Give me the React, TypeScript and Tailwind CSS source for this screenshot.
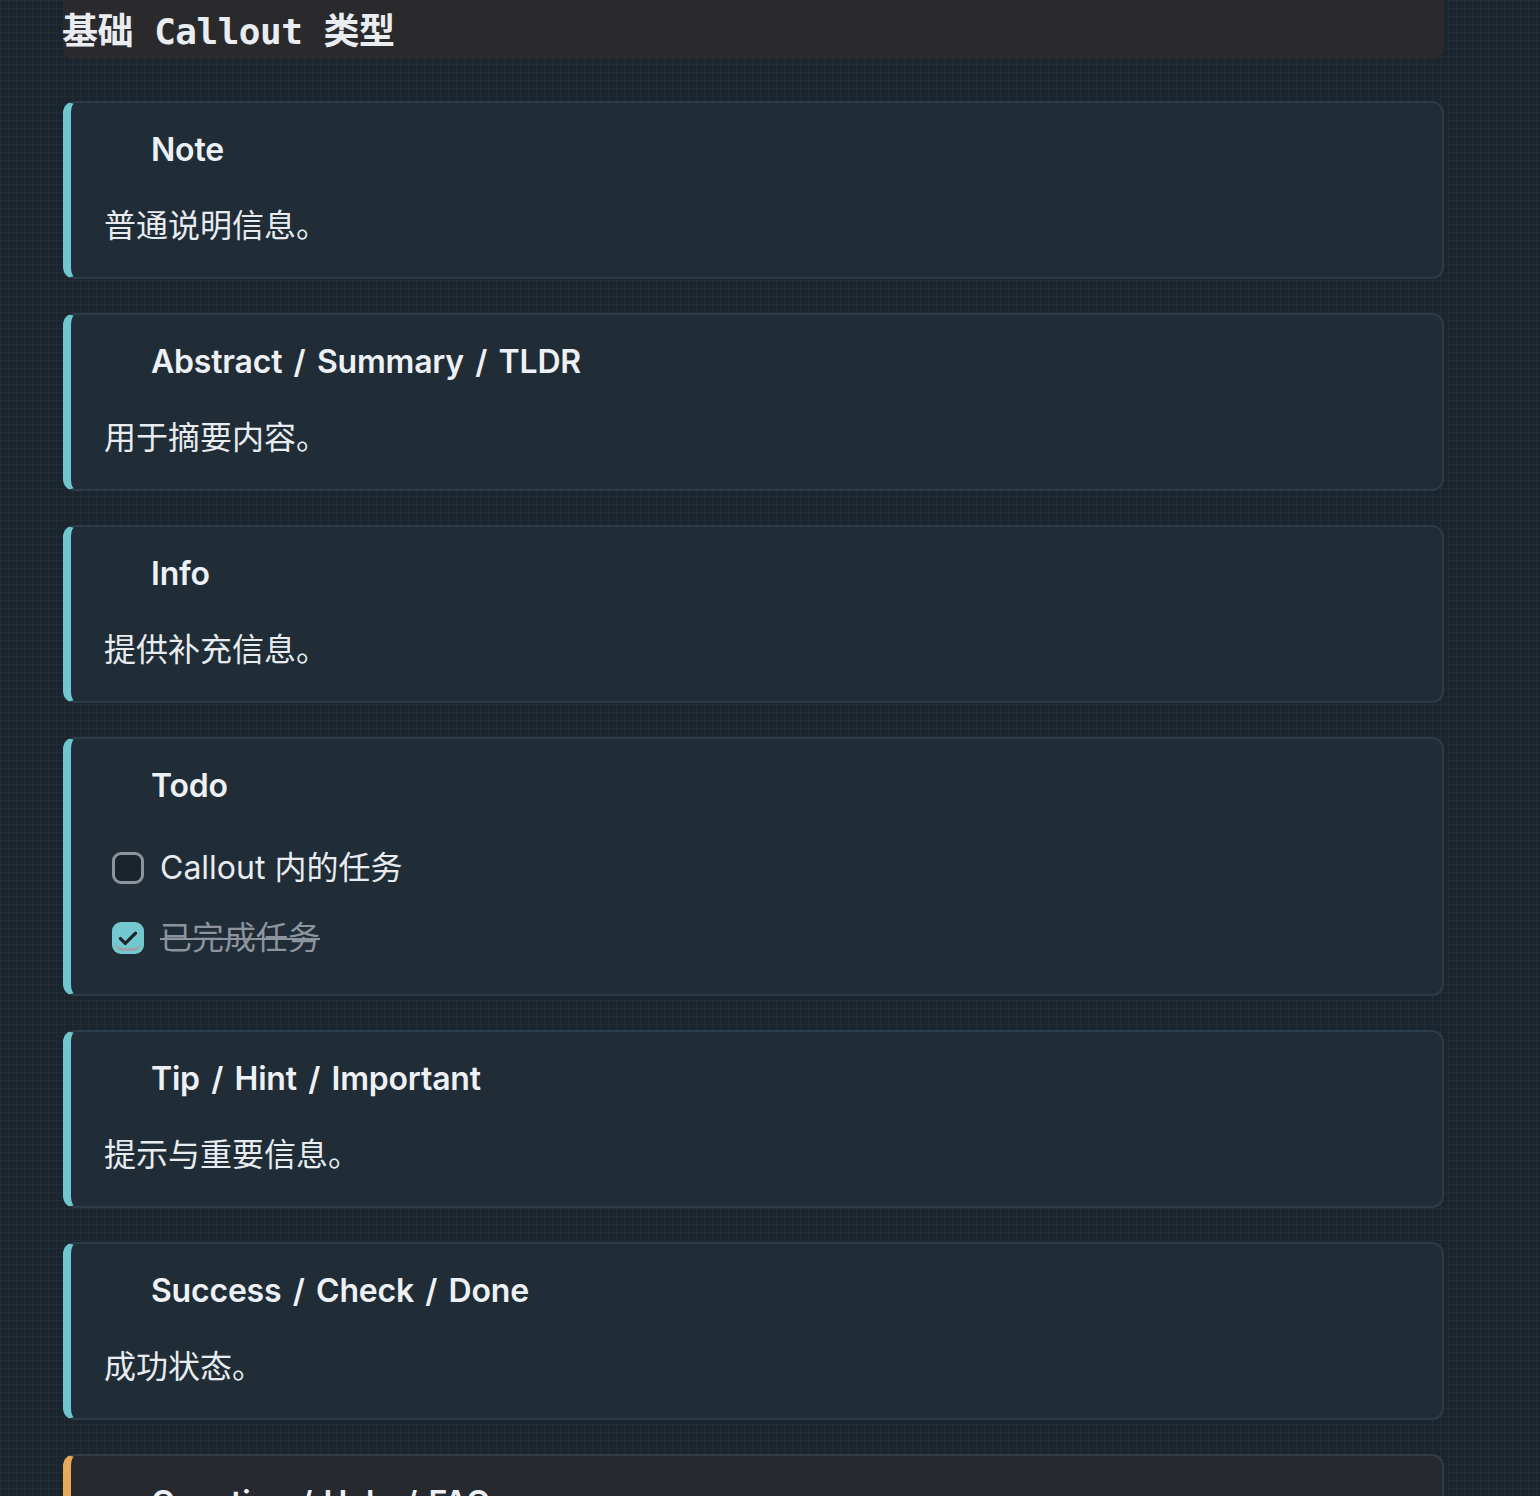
import React from "react";

const FONT = '"Inter", "Noto Sans CJK SC", sans-serif';

type Callout = {
  title: string;
  body?: string;
  accent: "teal" | "orange";
  todo?: boolean;
};

const callouts: Callout[] = [
  { title: "Note", body: "普通说明信息。", accent: "teal" },
  { title: "Abstract / Summary / TLDR", body: "用于摘要内容。", accent: "teal" },
  { title: "Info", body: "提供补充信息。", accent: "teal" },
  { title: "Todo", accent: "teal", todo: true },
  { title: "Tip / Hint / Important", body: "提示与重要信息。", accent: "teal" },
  { title: "Success / Check / Done", body: "成功状态。", accent: "teal" },
  { title: "Question / Help / FAQ", body: "问题与帮助。", accent: "orange" },
];

function Checkbox({ checked }: { checked: boolean }) {
  if (!checked) {
    return (
      <span className="ml-2 block h-8 w-8 shrink-0 rounded-[9px] border-[3px] border-[#8b949c] bg-[#1b232b]" />
    );
  }
  return (
    <span className="relative ml-2 flex h-8 w-8 shrink-0 items-center justify-center overflow-hidden rounded-[9px] bg-[#74c8d0]">
      <span className="absolute bottom-[3px] left-[3px] right-[3px] h-[8px] rounded-b-full border-b-[3px] border-[#9aa3aa]" />
      <svg viewBox="0 0 24 24" className="relative h-[26px] w-[26px]" fill="none">
        <path d="M5 12.5l4.5 4.5L19 7.5" stroke="#1b232b" strokeWidth="3" strokeLinecap="round" strokeLinejoin="round" />
      </svg>
    </span>
  );
}

function CalloutCard({ c }: { c: Callout }) {
  const orange = c.accent === "orange";
  return (
    <div
      className={
        orange
          ? "rounded-[12px] border-2 border-l-[8px] border-[#353e46] border-l-[#e8a95c] bg-[#262a2f] pb-[31px] pl-[33px] pr-8 pt-[27px]"
          : "rounded-[12px] border-2 border-l-[8px] border-[#2c3c48] border-l-[#70c6cf] bg-[#202c36] pb-[31px] pl-[33px] pr-8 pt-[27px]"
      }
    >
      <div className="pl-[47px] text-[32px] font-semibold leading-[40px] tracking-[-0.2px] text-[#edf1f5] [word-spacing:3.5px]">
        {c.title}
      </div>
      {c.todo ? (
        <div className="mt-[42px] mb-[5px] flex flex-col gap-[30px]">
          <div className="flex items-center gap-4">
            <Checkbox checked={false} />
            <span className="text-[32px] leading-[40px] text-[#e8ecf0]">Callout 内的任务</span>
          </div>
          <div className="flex items-center gap-4">
            <Checkbox checked />
            <span className="text-[32px] leading-[40px] text-[#8c959e] line-through decoration-2">已完成任务</span>
          </div>
        </div>
      ) : (
        <div className="mt-[36px] text-[32px] leading-[40px] text-[#e8ecf0]">{c.body}</div>
      )}
    </div>
  );
}

export default function App() {
  return (
    <div
      className="min-h-screen bg-[#1b252e] bg-[linear-gradient(rgba(255,255,255,0.028)_1px,transparent_1px),linear-gradient(90deg,rgba(255,255,255,0.028)_1px,transparent_1px)] bg-[size:8px_8px] pl-[63px] pr-[96px]"
      style={{ fontFamily: FONT }}
    >
      <h2 className="flex h-[59px] items-center rounded-b-[10px] bg-[#2a292c] pt-1">
        <span
          className="-ml-px text-[36px] font-bold leading-none tracking-[-0.5px] text-[#e9edf1]"
          style={{ fontFamily: '"DejaVu Sans Mono", "Noto Sans CJK SC", monospace' }}
        >
          基础 Callout 类型
        </span>
      </h2>
      <div className="mt-[42px] flex flex-col gap-[34px] pb-10">
        {callouts.map((c) => (
          <CalloutCard key={c.title} c={c} />
        ))}
      </div>
    </div>
  );
}
